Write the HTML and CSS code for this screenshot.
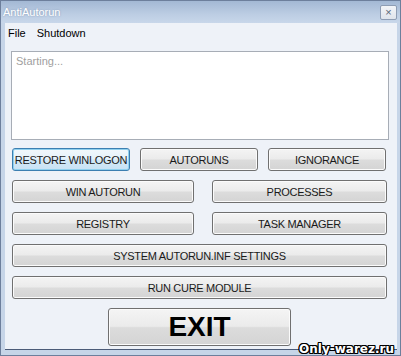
FILE: index.html
```html
<!DOCTYPE html>
<html>
<head>
<meta charset="utf-8">
<link rel="stylesheet" href="styles.css">
</head>
<body>
<div class="window">
  <div class="titlebar">
    <span class="title">AntiAutorun</span>
    <span class="close">×</span>
  </div>
  <div class="client">
    <div class="menu">
      <span class="menu-item">File</span>
      <span class="menu-item">Shutdown</span>
    </div>
    <div class="log">Starting...</div>
    <div class="buttons">
      <div class="row row3">
        <button class="btn focused">RESTORE WINLOGON</button>
        <button class="btn">AUTORUNS</button>
        <button class="btn">IGNORANCE</button>
      </div>
      <div class="row row2">
        <button class="btn">WIN AUTORUN</button>
        <button class="btn">PROCESSES</button>
      </div>
      <div class="row row2">
        <button class="btn">REGISTRY</button>
        <button class="btn">TASK MANAGER</button>
      </div>
      <div class="row">
        <button class="btn wide">SYSTEM AUTORUN.INF SETTINGS</button>
      </div>
      <div class="row">
        <button class="btn wide">RUN CURE MODULE</button>
      </div>
      <div class="row exit-row">
        <button class="btn exit">EXIT</button>
      </div>
    </div>
  </div>
  <div class="watermark">Only-warez.ru</div>
</div>
</body>
</html>
```

FILE: styles.css
```css
html, body {
  margin: 0;
  padding: 0;
}
body {
  font-family: "Liberation Sans", Arial, sans-serif;
  font-size: 11px;
  background: #ffffff;
}
.window {
  position: relative;
  width: 401px;
  height: 356px;
  box-sizing: border-box;
  background: #c6d5e8;
  border: 1px solid #6d7f9c;
  display: flex;
  flex-direction: column;
  overflow: hidden;
}
.titlebar {
  height: 22px;
  flex: none;
  display: flex;
  align-items: center;
  justify-content: space-between;
  background: linear-gradient(#a3b8d4, #bccde3 60%, #c8d7ea);
  padding: 0 3px 0 2px;
}
.title {
  color: #ffffff;
  font-size: 11px;
  text-shadow: 0 0 2px #7d92b0;
}
.close {
  width: 17px;
  height: 15px;
  box-sizing: border-box;
  border: 1px solid #8e9db4;
  border-radius: 2px;
  background: linear-gradient(#f3f5f8, #dfe4ec);
  color: #5a6578;
  font-size: 11px;
  line-height: 12px;
  text-align: center;
  margin-top: 1px;
}
.client {
  flex: 1;
  margin: 0 3px 5px 4px;
  background: #eef2f8;
  display: flex;
  flex-direction: column;
  border-bottom: 1px solid #4b5b78;
}
.menu {
  height: 20px;
  display: flex;
  align-items: center;
  padding-left: 3px;
  gap: 11px;
  color: #000000;
}
.menu-item {
  font-size: 11px;
}
.log {
  margin: 8px 0 0 6px;
  width: 378px;
  height: 89px;
  box-sizing: border-box;
  border: 1px solid #a7adb6;
  background: #ffffff;
  color: #a0a0a0;
  padding: 3px 4px;
  font-size: 11px;
}
.buttons {
  margin: 8px 0 0 7px;
  width: 375px;
  display: flex;
  flex-direction: column;
  gap: 9px;
}
.row {
  display: flex;
  gap: 10px;
  height: 23px;
}
.row3 .btn {
  width: 118px;
}
.row2 {
  gap: 18px;
}
.row2 .btn:first-child {
  width: 182px;
}
.row2 .btn:last-child {
  width: 175px;
}
.btn {
  margin: 0;
  height: 23px;
  box-sizing: border-box;
  border: 1px solid #707070;
  border-radius: 3px;
  background: linear-gradient(#f4f4f4 0%, #ebebeb 48%, #dcdcdc 52%, #d4d4d4 100%);
  font-family: "Liberation Sans", Arial, sans-serif;
  font-size: 11px;
  letter-spacing: -0.3px;
  white-space: nowrap;
  color: #1a1a1a;
  padding: 0;
  text-align: center;
  box-shadow: inset 0 0 0 1px #fbfbfb;
}
.btn.focused {
  border-color: #3c7fb1;
  background: linear-gradient(#f2f8fc 0%, #e4f1fa 48%, #d2e8f6 52%, #c8e2f4 100%);
  box-shadow: inset 0 0 0 1px #8fd0ee;
}
.btn.wide {
  width: 375px;
}
.exit-row {
  height: 38px;
  justify-content: flex-start;
  padding-left: 96px;
}
.btn.exit {
  width: 183px;
  height: 38px;
  font-size: 28px;
  font-weight: bold;
  letter-spacing: 0;
  color: #000000;
  line-height: 36px;
}
.watermark {
  position: absolute;
  right: 6px;
  bottom: 0px;
  font-family: "DejaVu Sans", sans-serif;
  font-weight: bold;
  font-size: 12px;
  line-height: 12px;
  color: #ffffff;
  text-shadow: 1px 0 0 #000, -1px 0 0 #000, 0 1px 0 #000, 0 -1px 0 #000, 1px 1px 0 #000, -1px -1px 0 #000, 1px -1px 0 #000, -1px 1px 0 #000;
}
```
